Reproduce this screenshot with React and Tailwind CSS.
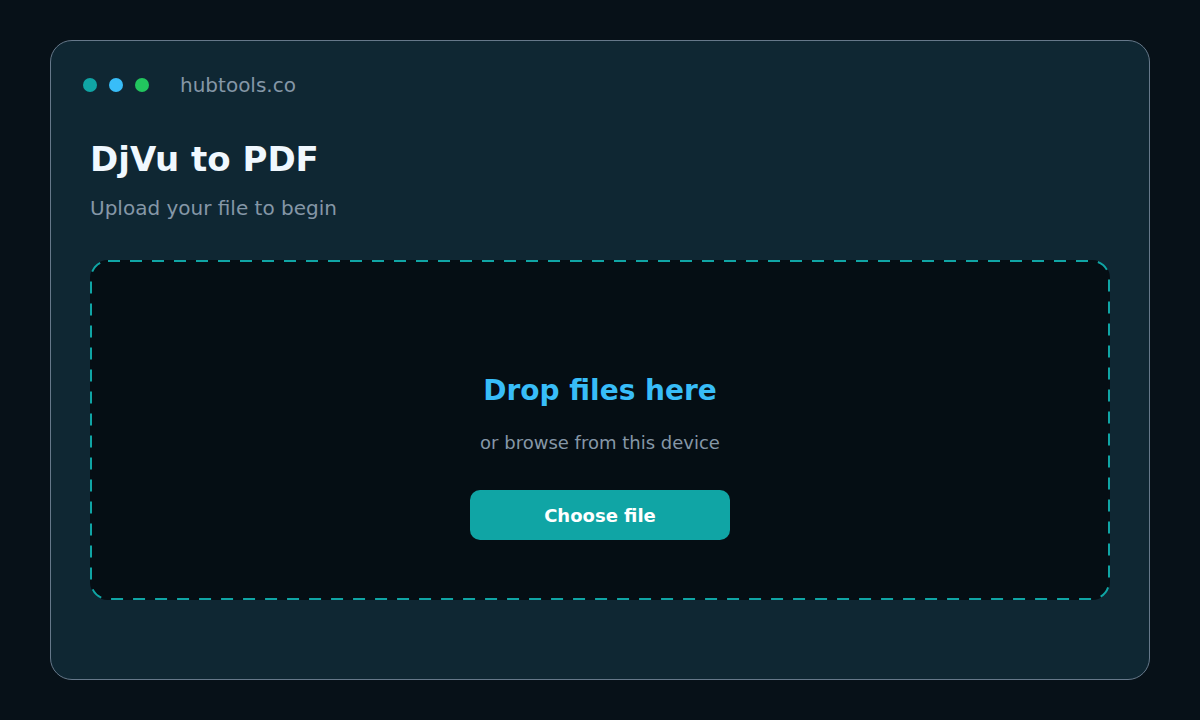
export default function App() {
  return (
    <div className="w-[1200px] h-[720px] bg-[#071118] pt-[40px] pl-[50px]" style={{ fontFamily: '"DejaVu Sans", sans-serif' }}>
      <div className="w-[1100px] h-[640px] rounded-[22px] border border-[#66788a] bg-[#0f2733] flex flex-col">
        <div className="flex items-center h-[28px] mt-[30px] pl-[32px]">
          <div className="flex gap-[12px]">
            <span className="w-[14px] h-[14px] rounded-full bg-[#10a5a5]" />
            <span className="w-[14px] h-[14px] rounded-full bg-[#38bdf8]" />
            <span className="w-[14px] h-[14px] rounded-full bg-[#22c55e]" />
          </div>
          <span className="ml-[31px] text-[20px] text-[#8597a7]">hubtools.co</span>
        </div>
        <div className="px-[39px] mt-[40px]">
          <h1 className="text-[34px] leading-[41px] font-bold text-[#f0f8ff]">DjVu to PDF</h1>
          <p className="mt-[14px] text-[20px] leading-[28px] text-[#8597a7]">Upload your file to begin</p>
          <div className="relative mt-[38px] h-[340px] rounded-[18px] bg-[#050e14] flex flex-col items-center pt-[113px]">
            <svg className="absolute inset-0 pointer-events-none" width="1020" height="340">
              <rect x="1" y="1" width="1018" height="338" rx="17" fill="none" stroke="#10a5a5" strokeWidth="2" strokeDasharray="12 10" />
            </svg>
            <div className="text-[28px] leading-[35px] font-bold text-[#38bdf8]">Drop files here</div>
            <div className="mt-[21px] text-[18px] leading-[27px] text-[#8597a7]">or browse from this device</div>
            <button className="mt-[34px] w-[260px] h-[50px] rounded-[10px] bg-[#10a5a5] text-white text-[18px] font-bold">Choose file</button>
          </div>
        </div>
      </div>
    </div>
  );
}
